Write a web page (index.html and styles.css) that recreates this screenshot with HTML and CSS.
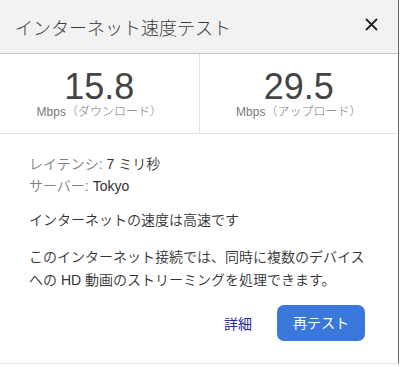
FILE: index.html
```html
<!DOCTYPE html>
<html lang="ja">
<head>
<meta charset="utf-8">
<link rel="stylesheet" href="styles.css">
</head>
<body>
<div class="dialog">
  <div class="header">
    <div class="title">インターネット速度テスト</div>
    <svg class="close" width="13" height="13" viewBox="0 0 13 13"><path d="M1 1 L12 12 M12 1 L1 12" stroke="#222" stroke-width="1.8" fill="none"/></svg>
  </div>
  <div class="speeds">
    <div class="speed">
      <div class="num">15.8</div>
      <div class="unit">Mbps（ダウンロード）</div>
    </div>
    <div class="speed">
      <div class="num">29.5</div>
      <div class="unit">Mbps（アップロード）</div>
    </div>
  </div>
  <div class="body">
    <div class="meta"><span class="lbl">レイテンシ:</span> 7 ミリ秒</div>
    <div class="meta"><span class="lbl">サーバー:</span> Tokyo</div>
    <div class="status">インターネットの速度は高速です</div>
    <div class="desc">このインターネット接続では、同時に複数のデバイス<br>への HD 動画のストリーミングを処理できます。</div>
    <div class="actions">
      <span class="link">詳細</span>
      <span class="btn">再テスト</span>
    </div>
  </div>
</div>
</body>
</html>
```
FILE: styles.css
```css
html, body {
  margin: 0;
  padding: 0;
  background: #fff;
}
body {
  font-family: "Liberation Sans", "Noto Sans CJK JP", sans-serif;
  color: #333;
}
.dialog {
  width: 398px;
  height: 363px;
  border-right: 1px solid #6a6a6a;
  border-bottom: 1px solid #e4e4e4;
  display: flex;
  flex-direction: column;
}
.header {
  height: 53px;
  background: #f2f2f2;
  border-bottom: 1px solid #c6c6c6;
  display: flex;
  justify-content: space-between;
  align-items: flex-start;
  padding: 0 20px 0 15px;
}
.title {
  font-size: 18px;
  line-height: 24px;
  margin-top: 17px;
  color: #3a3a3a;
  font-weight: 300;
}
.close {
  margin-top: 18px;
}
.speeds {
  display: flex;
  height: 79px;
  border-bottom: 1px solid #e2e2e2;
}
.speed {
  flex: 1;
  display: flex;
  flex-direction: column;
  align-items: center;
  padding-top: 15px;
}
.speed + .speed {
  border-left: 1px solid #e2e2e2;
}
.num {
  font-size: 36px;
  line-height: 36px;
  color: #444;
}
.unit {
  font-size: 12px;
  line-height: 14px;
  color: #7a7a7a;
  font-weight: 300;
}
.body {
  padding: 19px 33px 0 29px;
  font-size: 14px;
  flex: 1;
  display: flex;
  flex-direction: column;
  font-weight: 350;
  color: #333;
}
.meta {
  line-height: 22px;
}
.lbl {
  color: #808080;
}
.status {
  margin-top: 12px;
  line-height: 22px;
}
.desc {
  margin-top: 15px;
  line-height: 23px;
  white-space: nowrap;
}
.actions {
  margin-top: 13px;
  display: flex;
  justify-content: flex-end;
  align-items: center;
  gap: 25px;
}
.link {
  color: #26288a;
  font-weight: 400;
}
.btn {
  background: #3b78dc;
  color: #fff;
  height: 36px;
  line-height: 36px;
  padding: 0 16px;
  border-radius: 7px;
  font-weight: 400;
}
```
